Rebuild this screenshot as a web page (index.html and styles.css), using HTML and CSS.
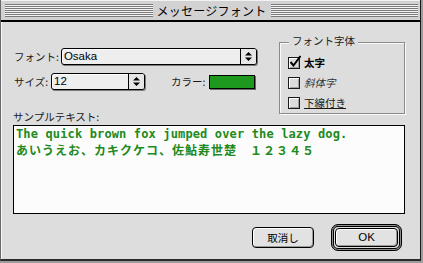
FILE: index.html
```html
<!DOCTYPE html>
<html lang="ja">
<head>
<meta charset="utf-8">
<title>メッセージフォント</title>
<link rel="stylesheet" href="styles.css">
</head>
<body>
<div class="window">
  <div class="titlebar">
    <div class="stripes"></div>
    <div class="title">メッセージフォント</div>
    <div class="stripes"></div>
  </div>
  <div class="content">
    <div class="top">
      <div class="fields">
        <div class="row row-font">
          <span class="label">フォント:</span>
          <div class="popup popup-font">
            <span class="popup-value">Osaka</span>
            <span class="popup-arrows"><svg width="7" height="9" viewBox="0 0 7 9"><path d="M3.5 0 L7 3.5 L0 3.5 Z M0 5.5 L7 5.5 L3.5 9 Z" fill="#000"/></svg></span>
          </div>
        </div>
        <div class="row row-size">
          <span class="label">サイズ:</span>
          <div class="popup popup-size">
            <span class="popup-value">12</span>
            <span class="popup-arrows"><svg width="7" height="9" viewBox="0 0 7 9"><path d="M3.5 0 L7 3.5 L0 3.5 Z M0 5.5 L7 5.5 L3.5 9 Z" fill="#000"/></svg></span>
          </div>
          <span class="label color-label">カラー:</span>
          <div class="swatch"></div>
        </div>
        <div class="sample-label">サンプルテキスト:</div>
      </div>
      <div class="group">
        <span class="group-title">フォント字体</span>
        <div class="check">
          <span class="box"><svg class="tick" width="14" height="14" viewBox="0 0 14 14"><path d="M2.5 7 L5.5 10.5 L12.5 1" fill="none" stroke="#000" stroke-width="2"/></svg></span>
          <span class="check-label bold">太字</span>
        </div>
        <div class="check">
          <span class="box"></span>
          <span class="check-label italic">斜体字</span>
        </div>
        <div class="check">
          <span class="box"></span>
          <span class="check-label under">下線付き</span>
        </div>
      </div>
    </div>
    <div class="sample">
      <div class="line latin">The quick brown fox jumped over the lazy dog.</div>
      <div class="line cjk">あいうえお、カキクケコ、佐鮎寿世楚　１２３４５</div>
    </div>
    <div class="buttons">
      <div class="button">取消し</div>
      <div class="ring"><div class="button ok">OK</div></div>
    </div>
  </div>
</div>
</body>
</html>
```

FILE: styles.css
```css
html, body {
  margin: 0;
  padding: 0;
  width: 423px;
  height: 263px;
  overflow: hidden;
  background: #9c9c9c;
}

.window {
  box-sizing: border-box;
  width: 421px;
  height: 261px;
  background: #dddddd;
  border-left: 1px solid #6a6a6a;
  border-right: 1px solid #1a1a1a;
  border-bottom: 2px solid #2a2a2a;
  display: flex;
  flex-direction: column;
  font-family: "Noto Sans CJK JP", "DejaVu Sans", sans-serif;
  color: #1a1a1a;
}

.titlebar {
  box-sizing: border-box;
  height: 22px;
  flex: none;
  background: #d2d2d2;
  border-bottom: 2px solid #000;
  display: flex;
  align-items: flex-start;
  padding: 4px 2px 0 4px;
  box-shadow: inset 0 1px 0 #f2f2f2;
}

.stripes {
  flex: 1;
  height: 13px;
  background: repeating-linear-gradient(to bottom, #7a7a7a 0 1px, #f4f4f4 1px 2px);
}

.title {
  padding: 0 4px;
  font-size: 12px;
  line-height: 13px;
  letter-spacing: 0.25px;
  color: #000;
}

.content {
  flex: 1;
  padding: 0 15px 0 12px;
  display: flex;
  flex-direction: column;
  box-shadow: inset 1px 0 0 #f6f6f6;
}

.top {
  display: flex;
  align-items: flex-start;
}

.fields {
  display: flex;
  flex-direction: column;
  padding-top: 26px;
}

.row {
  display: flex;
  align-items: center;
  height: 17px;
}

.row-size {
  margin-top: 8px;
}

.label {
  font-size: 10.5px;
  line-height: 14px;
  padding-left: 1px;
  margin-right: 2px;
}

.row-size .label {
  margin-right: 3px;
}

.popup {
  box-sizing: border-box;
  height: 17px;
  border: 1px solid #000;
  border-radius: 3px;
  background: #eeeeee;
  box-shadow: inset 1px 1px 0 #fff, 1px 1px 0 #7c7c7c;
  display: flex;
  align-items: stretch;
}

.popup-font {
  width: 196px;
}

.popup-size {
  width: 94px;
}

.popup-value {
  flex: 1;
  font-family: "Liberation Sans", Arial, sans-serif;
  font-size: 11.5px;
  line-height: 15px;
  padding-left: 2px;
  color: #000;
}

.popup-arrows {
  width: 15px;
  border-left: 1px solid #000;
  display: flex;
  align-items: center;
  justify-content: center;
  background: #e6e6e6;
  border-radius: 0 2px 2px 0;
}

.color-label {
  margin-left: 25px;
  margin-right: 6px;
}

.swatch {
  box-sizing: border-box;
  width: 46px;
  height: 14px;
  border: 1px solid #000;
  background: #1d9a1d;
  box-shadow: 1px 1px 0 #6a6a6a;
}

.sample-label {
  margin-top: 20px;
  font-size: 10.5px;
  line-height: 14px;
}

.group {
  position: relative;
  box-sizing: border-box;
  margin-left: auto;
  margin-top: 20px;
  width: 126px;
  height: 72px;
  border: 1px solid #8a8a8a;
  box-shadow: 1px 1px 0 #fafafa, inset 1px 1px 0 #fafafa;
  padding: 14px 0 0 8px;
  display: flex;
  flex-direction: column;
  gap: 8px;
}

.group-title {
  position: absolute;
  top: -9px;
  left: 9px;
  padding: 0 3px;
  background: #dddddd;
  font-size: 10.5px;
  line-height: 14px;
}

.check {
  display: flex;
  align-items: center;
  height: 12px;
}

.box {
  position: relative;
  box-sizing: border-box;
  width: 12px;
  height: 12px;
  border: 1px solid #1a1a1a;
  background: #dcdcdc;
  box-shadow: inset 1px 1px 0 #fff, inset -1px -1px 0 #a0a0a0;
  margin-right: 4px;
}

.tick {
  position: absolute;
  left: -1px;
  top: -3px;
}

.check-label {
  font-size: 10.5px;
  line-height: 14px;
}

.bold {
  font-weight: 700;
  color: #000;
}

.italic {
  font-style: italic;
  color: #333;
}

.under {
  text-decoration: underline;
}

.sample {
  box-sizing: border-box;
  margin-top: 1px;
  height: 89px;
  border: 1px solid #000;
  background: #fcfcfc;
  padding: 0 2px;
  color: #208a20;
  font-weight: 700;
}

.line {
  line-height: 16px;
  white-space: nowrap;
}

.latin {
  font-family: "DejaVu Sans Mono", "Liberation Mono", monospace;
  font-size: 12px;
  letter-spacing: 0.14px;
}

.cjk {
  font-family: "Noto Sans CJK JP", sans-serif;
  font-size: 12px;
  letter-spacing: 1px;
}

.buttons {
  display: flex;
  justify-content: flex-end;
  align-items: center;
  gap: 17px;
  margin-top: 10px;
  padding-right: 3px;
}

.button {
  box-sizing: border-box;
  width: 62px;
  height: 21px;
  border: 1px solid #000;
  border-radius: 4px;
  background: #e2e2e2;
  box-shadow: inset 1px 1px 0 #fff, inset -1px -1px 0 #9a9a9a;
  font-size: 10.5px;
  line-height: 19px;
  text-align: center;
  color: #000;
}

.ring {
  box-sizing: border-box;
  width: 71px;
  height: 27px;
  border: 1px solid #000;
  border-radius: 7px;
  box-shadow: inset 0 0 0 1px #8e8e8e, inset 0 0 0 2px #000;
  padding: 3px;
}

.button.ok {
  width: 63px;
  height: 19px;
  line-height: 17px;
  font-family: "Liberation Sans", Arial, sans-serif;
  font-size: 11.5px;
}
```
